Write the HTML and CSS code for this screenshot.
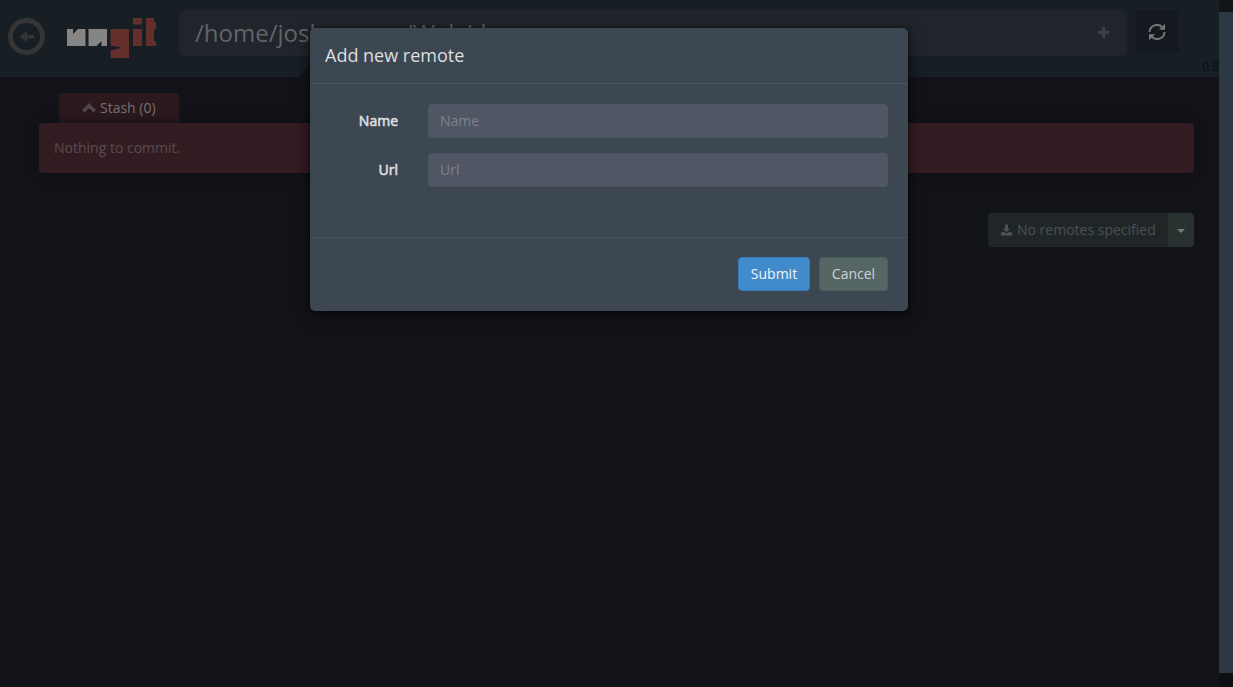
FILE: index.html
```html
<!DOCTYPE html>
<html lang="en">
<head>
<meta charset="utf-8">
<title>ungit</title>
<link rel="stylesheet" href="styles.css">
</head>
<body>
<div class="app">
  <div class="page">
    <header class="navbar">
      <svg class="back" viewBox="0 0 37 37"><circle cx="18.500" cy="18.500" r="16" fill="none" stroke="#353535" stroke-width="5"/><path d="M12 18.500l7-5.500v4h7v3.500h-7v4z" fill="#353535"/></svg>
      <svg class="logo" viewBox="0 0 90 42"><path fill="#858585" d="M0 12h6v5l5-5h7.500v17H0zM21.500 12h18.500v17h-5.500v-5l-5 5h-8z"/><path fill="#652f2b" d="M43.500 12h18.500v29H43.500v-7.500l11-3-11-2zM66 1h9v6.500h-9zM66 12h9v17h-9zM79 1h8v4h2v7h-2v12h2v5H79z"/></svg>
      <div class="path"><span>/home/joshua.mar/Web/d</span><svg class="plus" viewBox="0 0 10 10"><path d="M3.500 0h3v3.500H10v3H6.500V10h-3V6.500H0v-3h3.500z" fill="#3b3e42"/></svg></div>
      <div class="refresh"><svg viewBox="0 0 18 18"><path d="M1.500 9a7.300 7.300 0 0 1 13-4.300M16.500 9a7.300 7.300 0 0 1-13 4.300" fill="none" stroke="#777" stroke-width="2"/><path d="M17 .8v6h-6zM1 17.200v-6h6z" fill="#777"/></svg></div>
      <span class="version">0.8</span>
      <svg class="notch" viewBox="0 0 30 30"><path d="M0 30L30 0V30z" fill="#121318"/></svg>
    </header>
    <main class="content">
      <div class="stash"><svg viewBox="0 0 14 10"><path d="M7 0l7 7-2.500 2.500L7 5.200 2.500 9.500 0 7z" fill="#504649"/></svg>Stash (0)</div>
      <div class="commit">Nothing to commit.</div>
      <div class="remotes">
        <div class="remote-name"><svg viewBox="0 0 12 12"><path d="M4.500 0h3v4.500H10L6 8.500 2 4.500h2.500zM0 8.500h4L6 10.200l2-1.700h4V12H0z" fill="#505556"/></svg>No remotes specified</div>
        <div class="remote-menu"><i class="caret"></i></div>
      </div>
    </main>
  </div>
  <div class="edge"></div>
</div>
<form class="modal">
  <h4 class="modal-header">Add new remote</h4>
  <div class="modal-body">
    <label class="row"><span>Name</span><input type="text" placeholder="Name"></label>
    <label class="row"><span>Url</span><input type="text" placeholder="Url"></label>
  </div>
  <div class="modal-footer">
    <button type="button" class="btn primary">Submit</button>
    <button type="button" class="btn">Cancel</button>
  </div>
</form>
</body>
</html>
```
FILE: styles.css
```css
* { box-sizing: border-box; }
body { margin: 0; height: 687px; overflow: hidden; position: relative; background: #121318; font: 14px/20px "Open Sans", sans-serif; }
.app { display: flex; height: 687px; }
.page { width: 1219px; background: #121318; }
.edge { width: 14px; height: 687px; border-top: 12px solid #111519; border-bottom: 14px solid #0e0f12; background: #2c3843; }
.navbar { position: relative; display: flex; height: 77px; padding: 10px 0 0 8px; background: #171e24; }
.back { width: 37px; height: 37px; margin-top: 8px; }
.logo { width: 90px; height: 42px; margin: 7px 22px 0 22px; }
.path { display: flex; justify-content: space-between; width: 948px; height: 46px; padding: 0 18px 0 16px; border-radius: 6px; background: #21252b; color: #626467; font-size: 24px; line-height: 46px; }
.plus { width: 11px; height: 11px; margin-top: 17px; }
.refresh { width: 43px; height: 43px; margin-left: 9px; padding: 13px 0 0 12px; border-radius: 4px; background: #14191f; }
.refresh svg { display: block; width: 18px; height: 18px; }
.version { position: absolute; right: 0; top: 57px; font-size: 12px; color: #0b0f12; }
.notch { position: absolute; left: 298px; top: 47px; width: 30px; height: 30px; }
.content { padding: 16px 25px 0 39px; }
.stash { display: flex; align-items: center; width: 120px; height: 30px; margin-left: 20px; padding-left: 23px; border-radius: 4px 4px 0 0; background: linear-gradient(#2b191e 70%, #25161b); color: #737073; }
.stash svg { width: 14px; height: 10px; margin-right: 4px; }
.commit { height: 50px; padding: 15px; border-radius: 4px; background: #321c21; color: #5b4b4e; box-shadow: 0 0 16px rgba(0,0,0,.2); }
.remotes { display: flex; justify-content: flex-end; margin-top: 40px; height: 34px; }
.remote-name { display: flex; align-items: center; width: 180px; padding-left: 13px; border-radius: 4px 0 0 4px; background: #202628; color: #4b5051; }
.remote-name svg { width: 11px; height: 12px; margin-right: 5px; }
.remote-menu { display: flex; align-items: center; justify-content: center; width: 26px; border-radius: 0 4px 4px 0; background: #2a3231; }
.caret { border: 4px solid transparent; border-top-color: #797b7b; border-bottom: 0; margin-top: 2px; }
.modal { position: absolute; left: 310px; top: 28px; width: 598px; height: 283px; border-radius: 5px; background: #3d4752; box-shadow: 0 5px 15px rgba(0,0,0,.5), 0 0 4px rgba(0,0,0,.6); color: #dedfe0; }
.modal-header { margin: 0; height: 56px; padding: 15px; border-bottom: 1px solid #465461; font-size: 18px; font-weight: 400; line-height: 25px; }
.modal-body { height: 153px; padding: 20px 20px 0; }
.row { display: flex; align-items: center; justify-content: flex-end; height: 34px; margin-bottom: 15px; }
.row span { margin-right: 30px; -webkit-text-stroke: .6px #dedfe0; }
.row input { width: 460px; height: 34px; padding: 5px 11px 7px; border: 1px solid #4d5763; border-radius: 4px; background: #505663; color: #ddd; font: inherit; }
.row input::placeholder { color: #7d828c; }
.modal-footer { display: flex; justify-content: flex-end; gap: 9px; height: 74px; padding: 19px 20px; border-top: 1px solid #465461; }
.btn { width: 69px; height: 34px; padding: 0; border: 1px solid #4c5e5d; border-radius: 4px; background: #556664; color: #cfd2d3; font: inherit; }
.primary { width: 72px; background: #428bca; border-color: #357ebd; color: #f0f4f8; }
```
